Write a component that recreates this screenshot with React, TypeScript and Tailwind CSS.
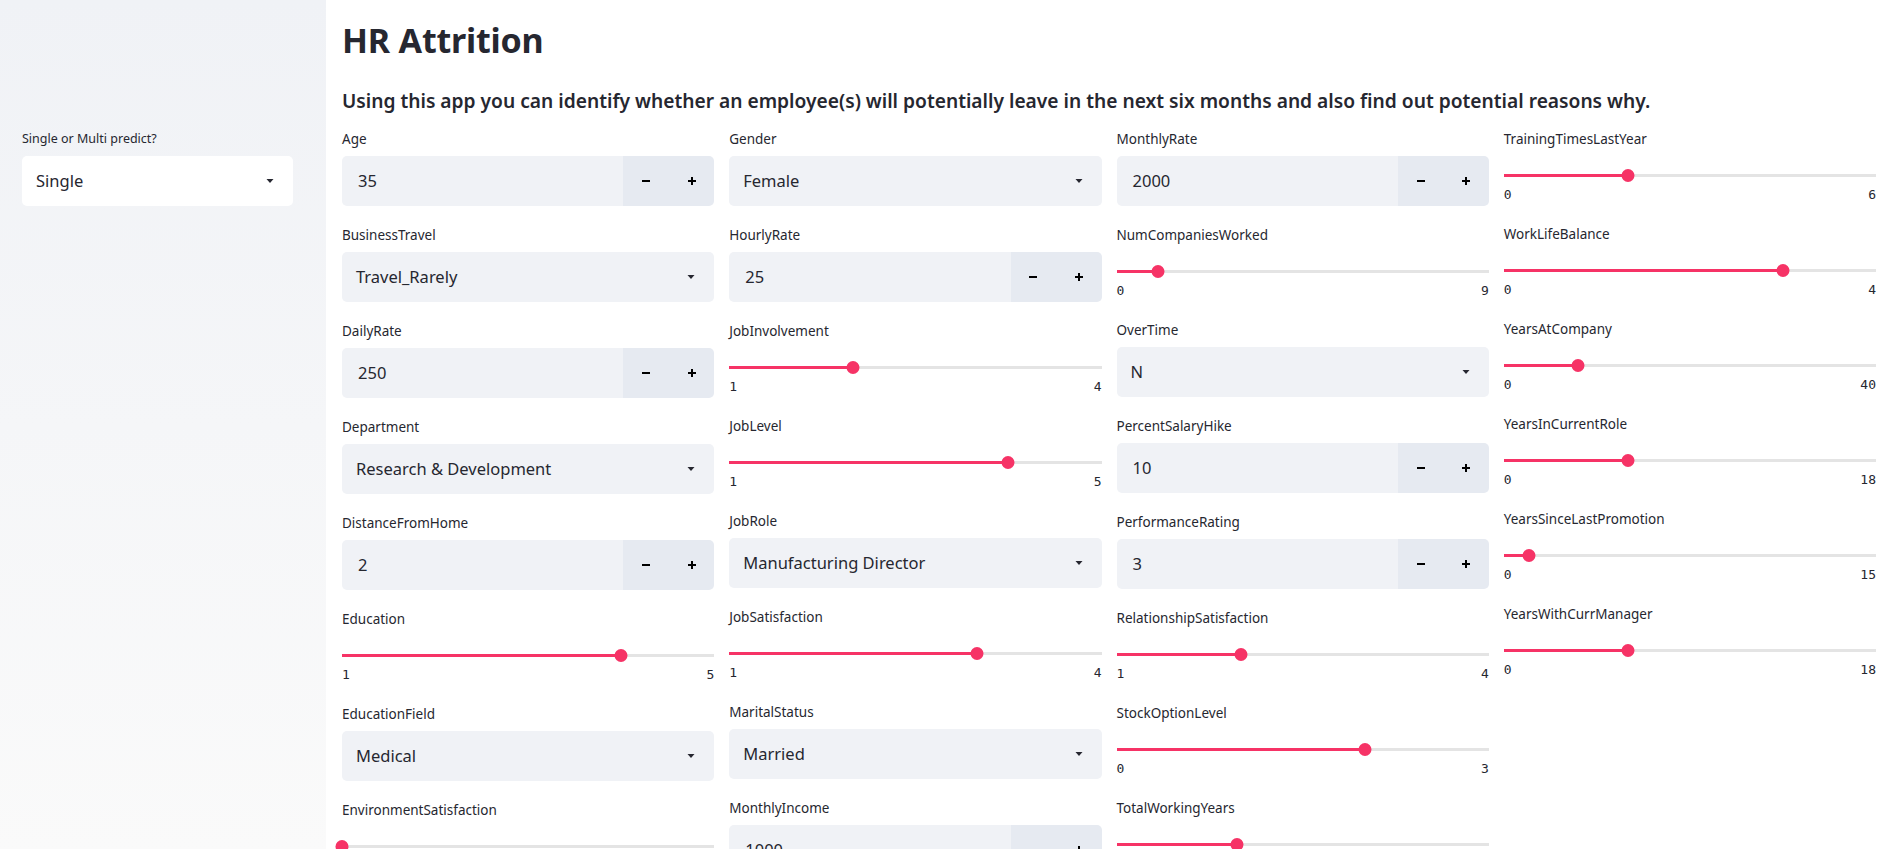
import React from 'react';

type Widget =
  | { kind: 'number'; label: string; value: string }
  | { kind: 'select'; label: string; value: string }
  | { kind: 'slider'; label: string; min: number; max: number; value: number };

const columns: Widget[][] = [
  [
    { kind: 'number', label: 'Age', value: '35' },
    { kind: 'select', label: 'BusinessTravel', value: 'Travel_Rarely' },
    { kind: 'number', label: 'DailyRate', value: '250' },
    { kind: 'select', label: 'Department', value: 'Research & Development' },
    { kind: 'number', label: 'DistanceFromHome', value: '2' },
    { kind: 'slider', label: 'Education', min: 1, max: 5, value: 4 },
    { kind: 'select', label: 'EducationField', value: 'Medical' },
    { kind: 'slider', label: 'EnvironmentSatisfaction', min: 1, max: 4, value: 1 },
  ],
  [
    { kind: 'select', label: 'Gender', value: 'Female' },
    { kind: 'number', label: 'HourlyRate', value: '25' },
    { kind: 'slider', label: 'JobInvolvement', min: 1, max: 4, value: 2 },
    { kind: 'slider', label: 'JobLevel', min: 1, max: 5, value: 4 },
    { kind: 'select', label: 'JobRole', value: 'Manufacturing Director' },
    { kind: 'slider', label: 'JobSatisfaction', min: 1, max: 4, value: 3 },
    { kind: 'select', label: 'MaritalStatus', value: 'Married' },
    { kind: 'number', label: 'MonthlyIncome', value: '1000' },
  ],
  [
    { kind: 'number', label: 'MonthlyRate', value: '2000' },
    { kind: 'slider', label: 'NumCompaniesWorked', min: 0, max: 9, value: 1 },
    { kind: 'select', label: 'OverTime', value: 'N' },
    { kind: 'number', label: 'PercentSalaryHike', value: '10' },
    { kind: 'number', label: 'PerformanceRating', value: '3' },
    { kind: 'slider', label: 'RelationshipSatisfaction', min: 1, max: 4, value: 2 },
    { kind: 'slider', label: 'StockOptionLevel', min: 0, max: 3, value: 2 },
    { kind: 'slider', label: 'TotalWorkingYears', min: 0, max: 40, value: 13 },
  ],
  [
    { kind: 'slider', label: 'TrainingTimesLastYear', min: 0, max: 6, value: 2 },
    { kind: 'slider', label: 'WorkLifeBalance', min: 0, max: 4, value: 3 },
    { kind: 'slider', label: 'YearsAtCompany', min: 0, max: 40, value: 8 },
    { kind: 'slider', label: 'YearsInCurrentRole', min: 0, max: 18, value: 6 },
    { kind: 'slider', label: 'YearsSinceLastPromotion', min: 0, max: 15, value: 1 },
    { kind: 'slider', label: 'YearsWithCurrManager', min: 0, max: 18, value: 6 },
  ],
];

const Caret = () => (
  <svg width="10" height="6" viewBox="0 0 10 6" className="shrink-0">
    <path d="M1.5 1h7L5 5z" fill="#262730" />
  </svg>
);

const Label = ({ text }: { text: string }) => (
  <div className="h-[18px] text-[13.5px] leading-[18px] text-[#262730]">{text}</div>
);

const NumberInput = ({ label, value }: { label: string; value: string }) => (
  <div>
    <Label text={label} />
    <div className="mt-2 flex h-[50px]">
      <div className="flex flex-1 items-center rounded-l-[5px] bg-[#f0f2f6] pl-4 text-[16.5px] text-[#262730]">
        {value}
      </div>
      <div className="flex w-[91px] rounded-r-[5px] bg-[#e6eaf1] text-black">
        <button className="flex flex-1 items-center justify-center">
          <svg width="10" height="10" viewBox="0 0 10 10">
            <path d="M1 5h8" stroke="currentColor" strokeWidth="2" />
          </svg>
        </button>
        <button className="flex flex-1 items-center justify-center">
          <svg width="10" height="10" viewBox="0 0 10 10">
            <path d="M1 5h8M5 1v8" stroke="currentColor" strokeWidth="2" />
          </svg>
        </button>
      </div>
    </div>
  </div>
);

const SelectBox = ({ label, value }: { label: string; value: string }) => (
  <div>
    <Label text={label} />
    <div className="mt-2 flex h-[50px] items-center justify-between rounded-[5px] bg-[#f0f2f6] pl-[14px] pr-[18px] text-[16.5px] text-[#262730]">
      <span>{value}</span>
      <Caret />
    </div>
  </div>
);

const Slider = ({ label, min, max, value }: { label: string; min: number; max: number; value: number }) => {
  const pct = ((value - min) / (max - min)) * 100;
  return (
    <div>
      <Label text={label} />
      <div className="relative mt-[18px] h-[18px]">
        <div className="absolute left-0 right-0 top-[8px] h-[3px] bg-[#e4e4e4]" />
        <div className="absolute left-0 top-[8px] h-[3px] bg-[#f63366]" style={{ width: `${pct}%` }} />
        <div
          className="absolute top-[3px] h-[13px] w-[13px] -translate-x-1/2 rounded-full bg-[#f63366]"
          style={{ left: `${pct}%` }}
        />
      </div>
      <div className="mt-px flex h-5 justify-between font-['DejaVu_Sans_Mono',monospace] text-[13px] leading-5 text-[#262730]">
        <span>{min}</span>
        <span>{max}</span>
      </div>
    </div>
  );
};

const Field = ({ w }: { w: Widget }) => {
  if (w.kind === 'number') return <NumberInput label={w.label} value={w.value} />;
  if (w.kind === 'select') return <SelectBox label={w.label} value={w.value} />;
  return <Slider label={w.label} min={w.min} max={w.max} value={w.value} />;
};

export default function App() {
  return (
    <div className="flex h-screen overflow-hidden bg-white font-['Noto_Sans',sans-serif] text-[#262730]">
      <aside className="w-[326px] shrink-0 bg-gradient-to-b from-[#f0f2f6] to-[#fafafa] pl-[22px] pr-[33px] pt-[130px]">
        <div className="h-[18px] text-[12.5px] leading-[18px]">Single or Multi predict?</div>
        <div className="mt-2 flex h-[50px] items-center justify-between rounded-[5px] bg-white pl-[14px] pr-[18px] text-[16.5px]">
          <span>Single</span>
          <Caret />
        </div>
      </aside>
      <main className="flex-1 pl-4 pr-[15px] pt-4">
        <h1 className="h-12 text-[34px] font-bold leading-[48px] tracking-[-0.2px]">HR Attrition</h1>
        <h2 className="mt-6 h-[26px] text-[19.2px] font-semibold leading-[26px]">
          Using this app you can identify whether an employee(s) will potentially leave in the next six months and also find out potential reasons why.
        </h2>
        <div className="mt-4 grid grid-cols-4 gap-x-[15px]">
          {columns.map((col, i) => (
            <div key={i} className="flex flex-col gap-5">
              {col.map(w => (
                <Field key={w.label} w={w} />
              ))}
            </div>
          ))}
        </div>
      </main>
    </div>
  );
}
